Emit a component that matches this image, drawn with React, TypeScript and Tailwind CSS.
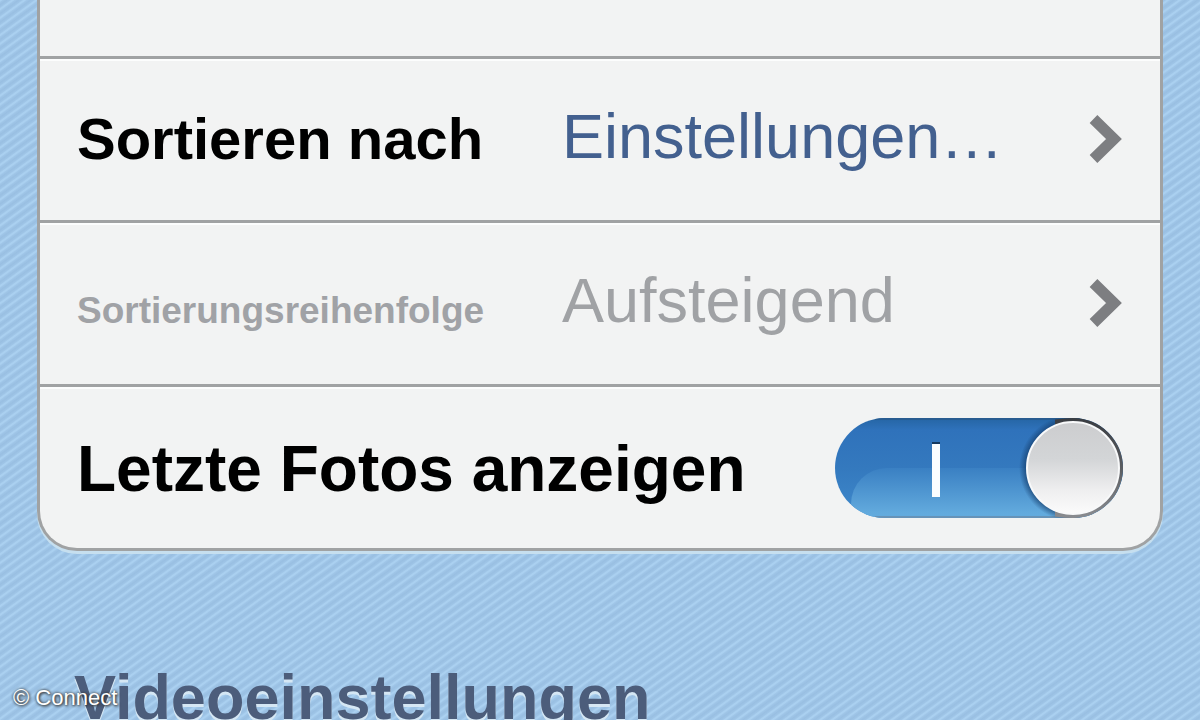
import type { ReactNode } from "react";

function Chevron() {
  return (
    <svg viewBox="0 0 34 50" className="h-[50px] w-[34px] shrink-0" aria-hidden="true">
      <path d="M4.5 4 25 24 4.5 44" fill="none" stroke="#7d7e81" strokeWidth="11" />
    </svg>
  );
}

function Row({ children, className = "" }: { children?: ReactNode; className?: string }) {
  return (
    <li className={"flex h-[164px] items-center border-b-[3px] border-[#a0a2a3] shadow-[inset_0_2px_0_#fcfdfd] last:h-[161px] last:border-b-0 " + className}>
      {children}
    </li>
  );
}

function LinkRow({ label, value, labelClass, valueClass }: { label: string; value: string; labelClass: string; valueClass: string }) {
  return (
    <Row>
      <button type="button" className="flex h-full w-full items-center pr-[37px] pl-[37px] text-left">
        <span className={"w-[485px] shrink-0 font-bold " + labelClass}>{label}</span>
        <span className={"min-w-0 flex-1 pb-[7px] text-[63px] leading-[72px] whitespace-nowrap " + valueClass}>{value}</span>
        <Chevron />
      </button>
    </Row>
  );
}

export default function App() {
  return (
    <div className="relative h-screen overflow-hidden bg-[#a1c7e9] bg-[repeating-linear-gradient(144deg,#aad0f0_0px,#aad0f0_1px,#a0c6e8_2px,#99bfe2_4px,#9fc5e7_6px,#aad0f0_7px)] font-['Liberation_Sans',Arial,sans-serif]">
      <main>
        <ul className="mx-[37px] overflow-hidden rounded-b-[40px] border-x-[3px] border-b-[3px] border-[#a0a2a3] bg-[#f2f3f3] shadow-[0_3px_0_#c6dfef]">
          <Row className="-mt-[105px]" />
          <LinkRow label="Sortieren nach" value="Einstellungen…" labelClass="text-[58px] leading-[64px] pb-[2px] text-black" valueClass="text-[#43608f]" />
          <LinkRow label="Sortierungsreihenfolge" value="Aufsteigend" labelClass="text-[37px] leading-[40px] pt-[14px] text-[#a0a2a6]" valueClass="text-[#a0a2a5]" />
          <Row className="justify-between pr-[37px] pl-[37px]">
            <label htmlFor="recent" className="pt-[2px] text-[64px] leading-[72px] font-bold whitespace-nowrap text-black">
              Letzte Fotos anzeigen
            </label>
            <span className="relative block h-[100px] w-[288px] shrink-0">
              <input id="recent" type="checkbox" role="switch" defaultChecked className="absolute inset-0 h-full w-full appearance-none rounded-full" />
              <svg viewBox="0 0 288 100" className="pointer-events-none absolute inset-0 h-full w-full" aria-hidden="true">
                <defs>
                  <linearGradient id="track" x1="0" y1="0" x2="0" y2="1">
                    <stop offset="0" stopColor="#2565a4" />
                    <stop offset="0.12" stopColor="#2f72bb" />
                    <stop offset="0.5" stopColor="#3479be" />
                    <stop offset="1" stopColor="#3f89cb" />
                  </linearGradient>
                  <linearGradient id="gloss" x1="0" y1="0" x2="0" y2="1">
                    <stop offset="0" stopColor="#3a80c3" />
                    <stop offset="0.5" stopColor="#62aadd" />
                    <stop offset="1" stopColor="#66b0e2" />
                  </linearGradient>
                  <linearGradient id="knob" x1="0" y1="0" x2="0" y2="1">
                    <stop offset="0" stopColor="#cccdcf" />
                    <stop offset="0.4" stopColor="#d3d5d7" />
                    <stop offset="0.75" stopColor="#efeff0" />
                    <stop offset="1" stopColor="#fbfbfb" />
                  </linearGradient>
                  <linearGradient id="rim" x1="0" y1="0" x2="0" y2="1">
                    <stop offset="0" stopColor="#3a3d42" />
                    <stop offset="0.5" stopColor="#5b5d61" />
                    <stop offset="1" stopColor="#8a8c90" />
                  </linearGradient>
                  <radialGradient id="shade">
                    <stop offset="0.88" stopColor="#123a68" stopOpacity="0.6" />
                    <stop offset="1" stopColor="#123a68" stopOpacity="0" />
                  </radialGradient>
                  <clipPath id="pill">
                    <rect width="288" height="100" rx="50" />
                  </clipPath>
                </defs>
                <g clipPath="url(#pill)">
                  <rect width="288" height="100" fill="url(#track)" />
                  <rect x="16" y="50" width="300" height="90" rx="36" fill="url(#gloss)" />
                  <path d="M40 99H245" stroke="#6693b8" strokeWidth="2" />
                  <path d="M40 1H245" stroke="#285c91" strokeWidth="2" />
                  <circle cx="237" cy="50" r="53" fill="url(#shade)" />
                </g>
                <rect x="97" y="24" width="8" height="4" fill="#153960" />
                <rect x="97" y="26" width="8" height="53" fill="#fafdff" />
                <path d="M220 1.5Q230 0 238 0A50 50 0 0 1 238 100Q230 100 220 98.5Z" fill="url(#rim)" />
                <circle cx="238" cy="50" r="46" fill="url(#knob)" stroke="#f8f9fa" strokeWidth="2" />
              </svg>
            </span>
          </Row>
        </ul>
        <h2 className="mt-[110px] ml-[74px] text-[63px] leading-[72px] font-bold whitespace-nowrap text-[#4c5d7b] [text-shadow:0_3px_0_#d5e7f4]">
          Videoeinstellungen
        </h2>
      </main>
      <p className="absolute bottom-[9px] left-[13px] text-[22px] leading-[26px] text-white [text-shadow:0_0_3px_#333,1px_1px_3px_#333]">© Connect</p>
    </div>
  );
}
